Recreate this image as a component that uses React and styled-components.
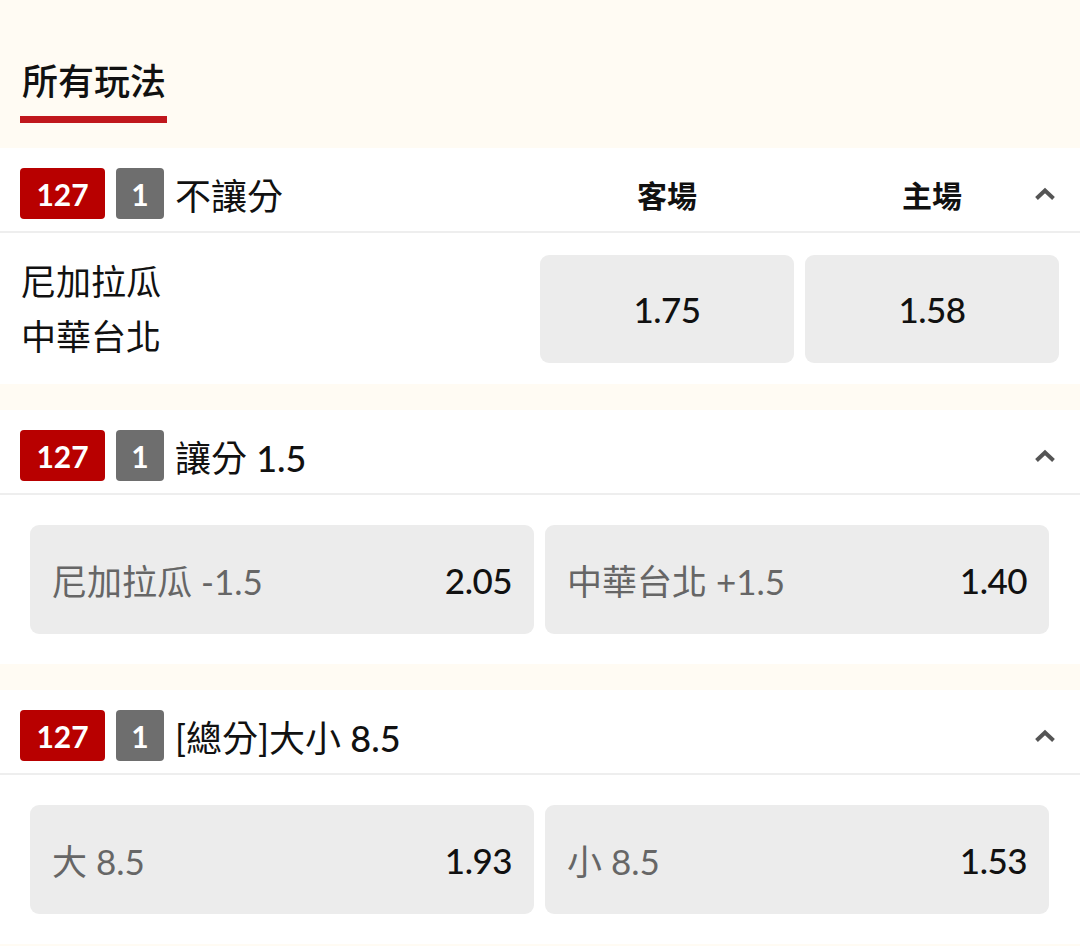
import React from 'react';
import styled, { createGlobalStyle } from 'styled-components';

const GlobalStyle = createGlobalStyle`
  body {
    margin: 0;
    background: #fffbf3;
    font-family: Lato, "Noto Sans CJK TC", sans-serif;
    color: #111;
  }
`;

const Page = styled.div`
  width: 1080px;
`;

const TitleBar = styled.div`
  padding: 63px 0 25px 20px;
`;

const Title = styled.div`
  display: inline-block;
  font-size: 36px;
  line-height: 1;
  font-weight: 500;
  padding: 0 1px 17px 2px;
  border-bottom: 7px solid #c0171c;
`;

const Card = styled.section`
  background: #fff;
  margin-bottom: 26px;
`;

const Header = styled.div`
  display: flex;
  align-items: center;
  height: 75px;
  padding: 8px 24px 0 20px;
  border-bottom: 2px solid #eeeeee;
`;

const TitleGroup = styled.div`
  flex: 1;
  display: flex;
  align-items: center;
  gap: 11px;
`;

const Badge = styled.span`
  display: inline-flex;
  align-items: center;
  justify-content: center;
  height: 51px;
  width: ${p => (p.$wide ? '85px' : '48px')};
  border-radius: 4px;
  background: ${p => (p.$wide ? '#b80000' : '#6e6e6e')};
  color: #fff;
  font-size: 30px;
  font-weight: 700;
`;

const MarketName = styled.span`
  font-size: 36px;
  font-weight: 400;
`;

const Num = styled.span`
  font-weight: 500;
`;

const ColLabel = styled.div`
  width: 204px;
  text-align: center;
  font-size: 30px;
  font-weight: 700;
  & + & {
    margin-left: 61px;
  }
`;

const Chevron = styled.svg`
  width: 22px;
  height: 14px;
  display: block;
`;

const MatchRow = styled.div`
  display: flex;
  align-items: center;
  gap: 11px;
  padding: 21px 21px 20px 20px;
`;

const Teams = styled.div`
  flex: 1;
  font-size: 35px;
  line-height: 55px;
  padding-left: 1px;
`;

const OddsButton = styled.button`
  width: 254px;
  height: 108px;
  border: 0;
  border-radius: 9px;
  background: #ececec;
  font-family: inherit;
  font-size: 35px;
  font-weight: 500;
  letter-spacing: -0.5px;
  color: #111;
`;

const PickGrid = styled.div`
  display: grid;
  grid-template-columns: 1fr 1fr;
  gap: 11px;
  padding: 30px 31px 30px 30px;
`;

const PickButton = styled.button`
  display: flex;
  align-items: center;
  justify-content: space-between;
  height: 109px;
  padding: 0 22px;
  border: 0;
  border-radius: 9px;
  background: #ececec;
  font-family: inherit;
`;

const PickLabel = styled.span`
  font-size: 35px;
  color: #666;
`;

const PickOdds = styled.span`
  font-size: 35px;
  font-weight: 500;
  letter-spacing: -0.5px;
  color: #111;
`;

const UpIcon = () => (
  <Chevron viewBox="0 0 22 14">
    <path d="M2.5 11.5 L11 3.5 L19.5 11.5" fill="none" stroke="#555" strokeWidth="4" />
  </Chevron>
);

const MarketHeader = ({ name, line, children }) => (
  <Header>
    <TitleGroup>
      <Badge $wide>127</Badge>
      <Badge>1</Badge>
      <MarketName>
        {name}
        {line && <Num>{line}</Num>}
      </MarketName>
    </TitleGroup>
    {children}
    <UpIcon />
  </Header>
);

const pickMarkets = [
  {
    name: '讓分 ',
    line: '1.5',
    picks: [
      { label: '尼加拉瓜 -1.5', odds: '2.05' },
      { label: '中華台北 +1.5', odds: '1.40' },
    ],
  },
  {
    name: '[總分]大小 ',
    line: '8.5',
    picks: [
      { label: '大 8.5', odds: '1.93' },
      { label: '小 8.5', odds: '1.53' },
    ],
  },
];

export default function App() {
  return (
    <Page>
      <GlobalStyle />
      <TitleBar>
        <Title>所有玩法</Title>
      </TitleBar>

      <Card>
        <MarketHeader name="不讓分">
          <ColLabel>客場</ColLabel>
          <ColLabel>主場</ColLabel>
        </MarketHeader>
        <MatchRow>
          <Teams>
            <div>尼加拉瓜</div>
            <div>中華台北</div>
          </Teams>
          <OddsButton>1.75</OddsButton>
          <OddsButton>1.58</OddsButton>
        </MatchRow>
      </Card>

      {pickMarkets.map(m => (
        <Card key={m.name}>
          <MarketHeader name={m.name} line={m.line} />
          <PickGrid>
            {m.picks.map(p => (
              <PickButton key={p.label}>
                <PickLabel>{p.label}</PickLabel>
                <PickOdds>{p.odds}</PickOdds>
              </PickButton>
            ))}
          </PickGrid>
        </Card>
      ))}
    </Page>
  );
}
